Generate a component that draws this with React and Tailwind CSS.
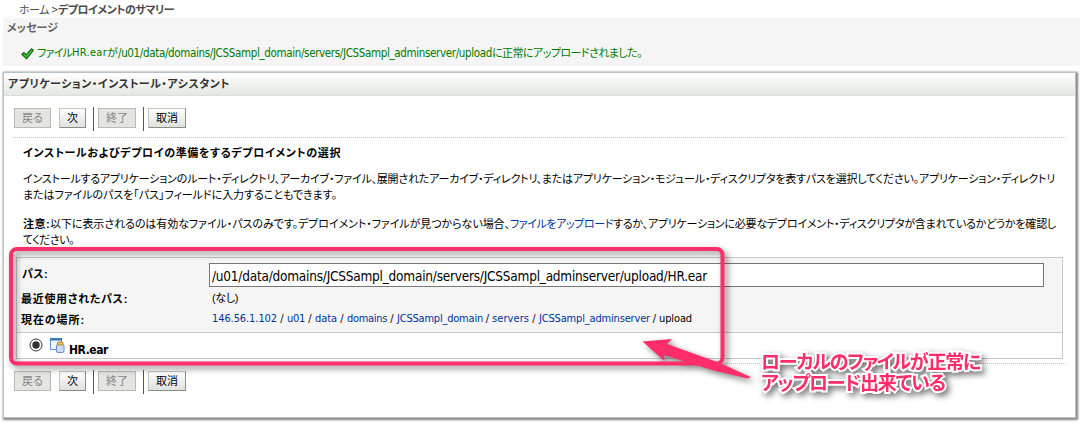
import React, { useLayoutEffect, useRef } from "react";

// Text run whose tracking is adjusted so that it fills a given width.
function Run({ w, className = "", children }) {
  const ref = useRef(null);
  useLayoutEffect(() => {
    const el = ref.current;
    el.style.letterSpacing = "0px";
    const range = document.createRange();
    range.selectNodeContents(el);
    const natural = range.getBoundingClientRect().width;
    el.style.letterSpacing = (w - natural) / children.length + "px";
  }, [w, children]);
  return (
    <span ref={ref} className={"block shrink-0 whitespace-pre " + className} style={{ width: w }}>
      {children}
    </span>
  );
}

const latin = "font-['DejaVu_Sans_Condensed','DejaVu_Sans',sans-serif] [font-stretch:condensed]";

function Button({ w, tw, disabled, children }) {
  return (
    <button
      style={{ width: w }}
      className={
        "flex h-[20px] shrink-0 items-center justify-center border text-[11px] leading-none " +
        (disabled
          ? "border-[#b9bab5] bg-[#e4e5e0] text-[#858585]"
          : "border-[#c4c6c0] border-r-[#8b8d88] border-b-[#8b8d88] bg-linear-to-b from-white to-[#dfe1dc] text-black")
      }
    >
      <Run w={tw}>{children}</Run>
    </button>
  );
}

function Toolbar() {
  return (
    <div className="flex h-[24px] items-start pl-[10px] pt-px">
      <Button w={37} tw={21} disabled>戻る</Button>
      <div className="w-[8px]" />
      <Button w={27} tw={11}>次</Button>
      <div className="-mt-px ml-[7px] mr-[4px] h-[24px] w-px bg-[#555]" />
      <Button w={38} tw={22} disabled>終了</Button>
      <div className="-mt-px ml-[7px] mr-[4px] h-[24px] w-px bg-[#555]" />
      <Button w={38} tw={22}>取消</Button>
    </div>
  );
}

function Dots() {
  return (
    <div className="ml-[9px] mr-[9px] h-px bg-[repeating-linear-gradient(90deg,#c4c4c4_0_1px,transparent_1px_2px)]" />
  );
}

const crumbs = [
  ["146.56.1.102", 65, 10],
  ["u01", 18, 10],
  ["data", 22, 10],
  ["domains", 40, 10],
  ["JCSSampl_domain", 86, 9],
  ["servers", 37, 10],
  ["JCSSampl_adminserver", 111, 9],
];

export default function App() {
  return (
    <div className="relative h-[424px] w-[1082px] overflow-hidden bg-white font-['Liberation_Sans','Noto_Sans_CJK_JP',sans-serif] text-[11px] leading-[16px] text-black [font-feature-settings:'palt']">
      <div className="flex h-[18px] items-center pl-[19px] pt-px text-[#4c4c4c]">
        <Run w={30}>ホーム</Run>
        <Run w={9} className={latin + " pl-[2px] text-[10px]"}>&gt;</Run>
        <Run w={116} className="font-bold">デプロイメントのサマリー</Run>
      </div>

      <section className="ml-[3px] mr-[2px] h-[48px] bg-[#f5f5f5]">
        <div className="flex h-[18px] items-center pl-[4px] pt-px font-bold text-[#666]">
          <Run w={51}>メッセージ</Run>
        </div>
        <div className="flex h-[33px] items-center pl-[18px] text-[#007a00]">
          <svg width="13" height="12" viewBox="0 0 13 12" className="mr-[3px] mt-[2px] shrink-0">
            <path d="M.8 6.2 3 4.6l2.200 2.200L10.400.8 12.300 2.300 5.600 10.800Z" fill="#43c043" stroke="#176b17" strokeWidth="1.200" strokeLinejoin="round" />
          </svg>
          <Run w={35}>ファイル</Run>
          <Run w={35} className={latin + " pt-px"}>HR.ear</Run>
          <Run w={11}>が</Run>
          <Run w={374} className={latin + " pt-px text-[11.5px]"}>/u01/data/domains/JCSSampl_domain/servers/JCSSampl_adminserver/upload</Run>
          <Run w={150}>に正常にアップロードされました。</Run>
        </div>
      </section>

      <section className="ml-[3px] mt-[6px] h-[346px] w-[1073px] border border-[#c0c3c5] border-t-[#b9c2c6] shadow-[1px_1px_2px_1px_rgba(60,65,65,0.65)]">
        <div className="flex h-[23px] items-center border-b border-[#dcdedc] bg-linear-to-b from-white to-[#e4e7e3] pl-[4px] font-bold text-[#333]">
          <Run w={222}>アプリケーション・インストール・アシスタント</Run>
        </div>
        <div className="pt-[11px]">
          <Toolbar />
        </div>
        <div className="pt-[6px]"><Dots /></div>

        <div className="pl-[19px] pt-[7px]">
          <Run w={318} className="font-bold">インストールおよびデプロイの準備をするデプロイメントの選択</Run>
          <div className="pt-[10px]">
            <Run w={1032}>インストールするアプリケーションのルート・ディレクトリ、アーカイブ・ファイル、展開されたアーカイブ・ディレクトリ、またはアプリケーション・モジュール・ディスクリプタを表すパスを選択してください。アプリケーション・ディレクトリ</Run>
            <Run w={314}>またはファイルのパスを「パス」フィールドに入力することもできます。</Run>
          </div>
          <div className="flex pt-[13px]">
            <Run w={27} className="font-bold">注意:</Run>
            <Run w={460}>以下に表示されるのは有効なファイル・パスのみです。デプロイメント・ファイルが見つからない場合、</Run>
            <Run w={103} className="text-[#003399]">ファイルをアップロード</Run>
            <Run w={443}>するか、アプリケーションに必要なデプロイメント・ディスクリプタが含まれているかどうかを確認し</Run>
          </div>
          <Run w={51}>てください。</Run>
        </div>

        <div className="ml-[12px] mt-[9px] h-[102px] w-[1047px] border border-[#c8c8c8] bg-[#f5f5f5]">
          <div className="flex h-[29px] pl-[5px] pt-[5px]">
            <div className="w-[187px] pt-[3px] font-bold"><Run w={26}>パス:</Run></div>
            <div className="flex h-[24px] w-[835px] items-center border border-[#777] bg-white pl-[2px] pt-px text-[13.5px]">
              <Run w={495} className={latin}>/u01/data/domains/JCSSampl_domain/servers/JCSSampl_adminserver/upload/HR.ear</Run>
            </div>
          </div>
          <div className="flex h-[22px] items-center pl-[4px]">
            <div className="w-[191px] pt-[2px] font-bold"><Run w={107}>最近使用されたパス:</Run></div>
            <Run w={26}>(なし)</Run>
          </div>
          <div className="flex h-[24px] items-center border-b border-[#c8c8c8] pb-[4px] pl-[4px]">
            <div className="w-[191px] pt-[3px] font-bold"><Run w={64}>現在の場所:</Run></div>
            <div className={"flex " + latin}>
              {crumbs.map(([t, w, gap]) => (
                <React.Fragment key={t}>
                  <Run w={w} className="text-[#003399]">{t}</Run>
                  <span className="shrink-0 text-center" style={{ width: gap }}>/</span>
                </React.Fragment>
              ))}
              <Run w={33}>upload</Run>
            </div>
          </div>
          <div className="flex h-[25px] bg-white pl-[12px]">
            <svg width="14" height="14" viewBox="0 0 14 14" className="mt-[5px] shrink-0">
              <circle cx="7" cy="7" r="6" fill="#fff" stroke="#333" />
              <circle cx="7" cy="7" r="3.7" fill="#333" />
            </svg>
            <svg width="15" height="16" viewBox="0 0 15 16" className="ml-[7px] mt-[4px] shrink-0">
              <path d="M.5 1.5h11v11H.5Z" fill="#eef5fc" stroke="#5c8fc4" />
              <path d="M0 1h12v2.5H0Z" fill="#3d77b7" />
              <rect x="6.5" y="7.5" width="7.5" height="8" rx="1.5" fill="#cddcf0" stroke="#6f8fb8" />
              <rect x="7.5" y="5" width="5.5" height="3" rx=".6" fill="#e8bd55" stroke="#a17c28" strokeWidth=".8" />
            </svg>
            <div className="pl-[4px] pt-[9px] font-bold"><Run w={39} className={latin + " text-[12px]"}>HR.ear</Run></div>
          </div>
        </div>
        <div className="pt-[4px]"><Dots /></div>
        <div className="pt-[6px]"><Toolbar /></div>
      </section>

      <svg className="pointer-events-none absolute left-0 top-0 drop-shadow-[3px_3px_3px_rgba(0,0,0,0.5)]" width="1082" height="424">
        <rect x="11" y="249" width="711.5" height="114.5" rx="6" fill="none" stroke="#ff2d69" strokeWidth="4" />
        <path d="M642.5 341.5 672 339 667 344 720 363 750.500 377Q750 379 745 378L712 370 664 355 664.500 361Z" fill="#ff2d69" />
      </svg>

      <div className="absolute left-[761px] top-[352px] text-[19px] font-bold leading-[21px] text-[#ff2d69] [-webkit-text-stroke:4px_white] [paint-order:stroke_fill] drop-shadow-[3px_3px_3px_rgba(0,0,0,0.55)]">
        <Run w={219}>ローカルのファイルが正常に</Run>
        <Run w={184}>アップロード出来ている</Run>
      </div>
    </div>
  );
}
